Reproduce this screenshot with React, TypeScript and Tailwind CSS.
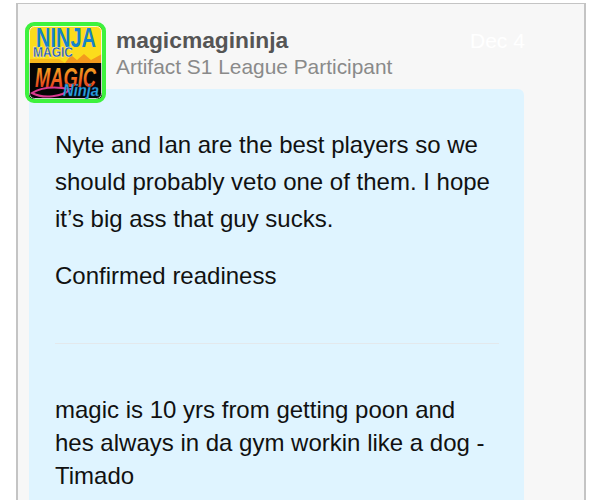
function Avatar() {
  return (
    <div className="w-[81px] h-[81px] shrink-0 rounded-[9px] border-[4px] border-[#3df23d] overflow-hidden bg-black">
      <svg viewBox="0 0 73 73" width="73" height="73" className="block">
        <defs>
          <linearGradient id="magicFill" x1="0" y1="0" x2="0" y2="1">
            <stop offset="0" stopColor="#f7c51e" />
            <stop offset="0.55" stopColor="#ef6a1f" />
            <stop offset="1" stopColor="#d8231f" />
          </linearGradient>
        </defs>
        <rect width="73" height="37" fill="#fbdc1c" />
        <path d="M36 37 L42 29 L48 34 L55 28 L62 34 L73 28 V37 Z" fill="#f39a1d" />
        <path d="M0 37 H36 L30 33 H0 Z" fill="#f7b81c" />
        <rect y="37" width="73" height="36" fill="#050505" />
        <rect x="0.5" y="0.5" width="72" height="72" rx="5" fill="none" stroke="#ffffff" strokeWidth="0.8" />
        <text x="7" y="21" fontFamily="Liberation Sans, sans-serif" fontWeight="700" fontSize="27" fill="#1583c9" textLength="60" lengthAdjust="spacingAndGlyphs">NINJA</text>
        <text x="4" y="31" fontFamily="Liberation Sans, sans-serif" fontWeight="700" fontSize="14" fill="#1a55a8" stroke="#ffffff" strokeWidth="0.3" textLength="40" lengthAdjust="spacingAndGlyphs">MAGIC</text>
        <path d="M3 67 C14 60 30 61 41 63 C34 71 14 73 3 67 Z" fill="none" stroke="#d8398f" strokeWidth="2" />
        <text x="6" y="61" fontFamily="Liberation Sans, sans-serif" fontWeight="700" fontStyle="italic" fontSize="28" fill="url(#magicFill)" textLength="61" lengthAdjust="spacingAndGlyphs">MAGIC</text>
        <text x="34" y="70" fontFamily="Liberation Sans, sans-serif" fontWeight="700" fontStyle="italic" fontSize="17" fill="#2aa3e0" stroke="#0d3f78" strokeWidth="0.3" textLength="36" lengthAdjust="spacingAndGlyphs">Ninja</text>
      </svg>
    </div>
  )
}

export default function App() {
  return (
    <div className="h-[500px] w-[603px] overflow-hidden bg-white font-['Liberation_Sans',Arial,sans-serif]">
      <div className="ml-4 mr-[17px] mt-[3px] h-[497px] border-l-2 border-r-2 border-t border-[#c4c4c4] bg-[#f7f7f7] pl-[7px] pt-[18px]">
        <div className="relative h-[67px]">
          <div className="flex gap-[10px]">
            <Avatar />
            <div className="pt-[5px]">
              <div className="text-[22.8px] leading-[27px] font-bold text-[#555555]">magicmagininja</div>
              <div className="text-[20.9px] leading-[25px] text-[#8a8a8a]">Artifact S1 League Participant</div>
            </div>
          </div>
          <span className="absolute left-[445px] top-[6px] text-[21px] leading-[25px] text-white">Dec 4</span>
        </div>
        <div className="ml-1 w-[495px] h-[500px] rounded-t-[6px] bg-[#dff4ff] pl-[26px] pr-[25px] pt-[37px] text-[#111111]">
          <p className="text-[24px] leading-[37px]">
            Nyte and Ian are the best players so we should probably veto one of them. I hope it’s big ass that guy sucks.
          </p>
          <p className="mt-[20px] text-[24px] leading-[37px]">Confirmed readiness</p>
          <div className="mt-[49px] h-px bg-[#e3e8ec]" />
          <p className="mt-[49px] text-[24px] leading-[33px]">
            magic is 10 yrs from getting poon and hes always in da gym workin like a dog - Timado
          </p>
        </div>
      </div>
    </div>
  )
}
